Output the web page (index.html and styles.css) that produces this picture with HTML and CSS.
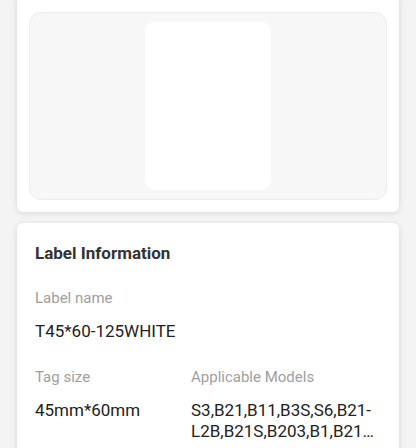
FILE: index.html
```html
<!DOCTYPE html>
<html lang="en">
<head>
    <meta charset="UTF-8">
    <meta name="viewport" content="width=device-width, initial-scale=1.0">
    <title>Label Details</title>
    <link rel="stylesheet" href="styles.css">
</head>
<body>
    <div class="page">
        <div class="card preview-card">
            <div class="preview">
                <div class="label-sheet"></div>
            </div>
        </div>

        <div class="card info-card">
            <h3 class="info-title">Label Information</h3>

            <div class="field">
                <div class="field-label">Label name</div>
                <div class="field-value">T45*60-125WHITE</div>
            </div>

            <div class="field-row">
                <div class="field">
                    <div class="field-label">Tag size</div>
                    <div class="field-value">45mm*60mm</div>
                </div>
                <div class="field">
                    <div class="field-label">Applicable Models</div>
                    <div class="field-value clamp">S3,B21,B11,B3S,S6,B21-L2B,B21S,B203,B1,B21C2B,B3,B1S</div>
                </div>
            </div>
        </div>
    </div>
</body>
</html>
```

FILE: styles.css
```css
body {
    margin: 0;
    background-color: #f4f4f4;
    font-family: 'Roboto', 'Noto Sans', sans-serif;
    color: #222;
    overflow: hidden;
}

.page {
    padding: 0 17px;
}

.card {
    background-color: #fff;
    border-radius: 6px;
    box-shadow: 0 1px 6px rgba(0, 0, 0, 0.12);
}

.preview-card {
    margin-top: -10px;
    padding: 22px 12px 12px;
}

.preview {
    display: flex;
    justify-content: center;
    padding: 9px 0;
    background-color: #f7f7f7;
    border: 1px solid #ececec;
    border-radius: 12px;
}

.label-sheet {
    width: 126px;
    height: 168px;
    background-color: #fff;
    border-radius: 10px;
}

.info-card {
    margin-top: 11px;
    padding: 19px 18px 18px;
}

.info-title {
    margin: 0 0 24px;
    font-size: 17px;
    line-height: 22px;
    font-weight: bold;
    color: #333;
}

.field {
    margin-bottom: 25px;
}

.field-label {
    font-size: 15px;
    line-height: 20px;
    color: #9e9e9e;
    margin-bottom: 13px;
}

.field-value {
    font-size: 17px;
    line-height: 21px;
    color: #222;
}

.field-row {
    display: grid;
    grid-template-columns: 156px 1fr;
}

.clamp {
    display: -webkit-box;
    -webkit-line-clamp: 2;
    -webkit-box-orient: vertical;
    overflow: hidden;
    overflow-wrap: anywhere;
}
```
